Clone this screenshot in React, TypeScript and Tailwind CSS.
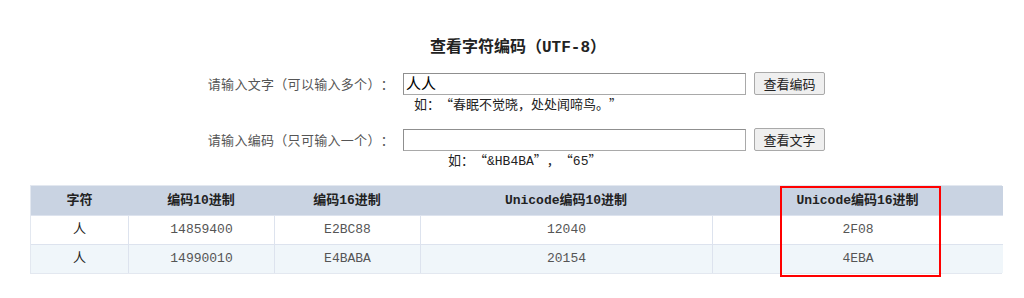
import React from 'react';

const rows = [
  { ch: '人', dec: '14859400', hex: 'E2BC88', udec: '12040', uhex: '2F08' },
  { ch: '人', dec: '14990010', hex: 'E4BABA', udec: '20154', uhex: '4EBA' },
];

const heads = ['字符', '编码10进制', '编码16进制', 'Unicode编码10进制', 'Unicode编码16进制'];

const M: React.FC<{ children: React.ReactNode }> = ({ children }) => (
  <span className="[font-family:'Liberation_Mono','Noto_Sans_CJK_SC',monospace]">{children}</span>
);

const FormRow: React.FC<{ label: string; value: string; button: string; hint: React.ReactNode; hintPad: string }> = ({
  label,
  value,
  button,
  hint,
  hintPad,
}) => (
  <div className="[font-family:'Noto_Sans_CJK_SC','Liberation_Mono',sans-serif]">
    <div className="flex items-center">
      <div className="w-[398px] pr-[4px] text-right text-[13px] leading-[22px] tracking-[0.3px] text-[#555]">{label}</div>
      <input
        readOnly
        value={value}
        className="ml-[5px] h-[22px] w-[343px] border border-[#a9a9a9] border-t-[#8f8f8f] border-l-[#8f8f8f] px-[2px] text-[15px] text-black outline-none"
      />
      <button className="ml-[8px] h-[23px] w-[71px] rounded-[2px] border border-[#a9a9a9] bg-[#efefef] text-[13px] text-[#222]">
        {button}
      </button>
    </div>
    <div className={`text-[13px] leading-[18px] text-[#222] ${hintPad}`}>{hint}</div>
  </div>
);

export default function App() {
  return (
    <div className="relative h-[298px] w-[1024px] overflow-hidden bg-white [font-family:'Liberation_Mono','Noto_Sans_CJK_SC',monospace] [text-spacing-trim:space-all]">
      <h1 className="pl-[12px] pt-[35px] text-center text-[16px] font-bold leading-[20px] text-[#222] [font-family:'Noto_Sans_CJK_SC','Liberation_Mono',sans-serif]">
        查看字符编码（<M>UTF-8</M>）
      </h1>

      <div className="mt-[14px] flex flex-col gap-[15px]">
        <FormRow
          label="请输入文字（可以输入多个）："
          value="人人"
          button="查看编码"
          hint="如：“春眠不觉晓，处处闻啼鸟。”"
          hintPad="pl-[414px]"
        />
        <FormRow
          label="请输入编码（只可输入一个）："
          value=""
          button="查看文字"
          hint={
            <>
              如：“<M>&amp;HB4BA</M>”，“<M>65</M>”
            </>
          }
          hintPad="pl-[448px]"
        />
      </div>

      <div className="ml-[30px] mt-[14px] grid w-[972px] grid-cols-[97px_146px_146px_292px_291px] border border-[#e3e8f0] text-center text-[13px]">
        {heads.map((h) => (
          <div key={h} className="flex h-[29px] items-center justify-center bg-[#c9d3e2] font-bold text-[#222]">
            {h}
          </div>
        ))}
        {rows.map((r, i) => {
          const bg = i === 0 ? 'bg-white' : 'bg-[#f0f6fa]';
          const cells = [r.ch, r.dec, r.hex, r.udec, r.uhex];
          return cells.map((c, j) => (
            <div
              key={`${i}-${j}`}
              className={`flex h-[29px] items-center justify-center border-t border-[#dde3ee] ${bg} ${
                j > 0 ? 'border-l' : ''
              } ${j === 0 ? 'text-[#222]' : 'text-[#555]'}`}
            >
              {c}
            </div>
          ));
        })}
      </div>

      {/* red highlight box */}
      <div className="absolute left-[780px] top-[186px] h-[91px] w-[161px] border-2 border-[#ff0000]" />
    </div>
  );
}
